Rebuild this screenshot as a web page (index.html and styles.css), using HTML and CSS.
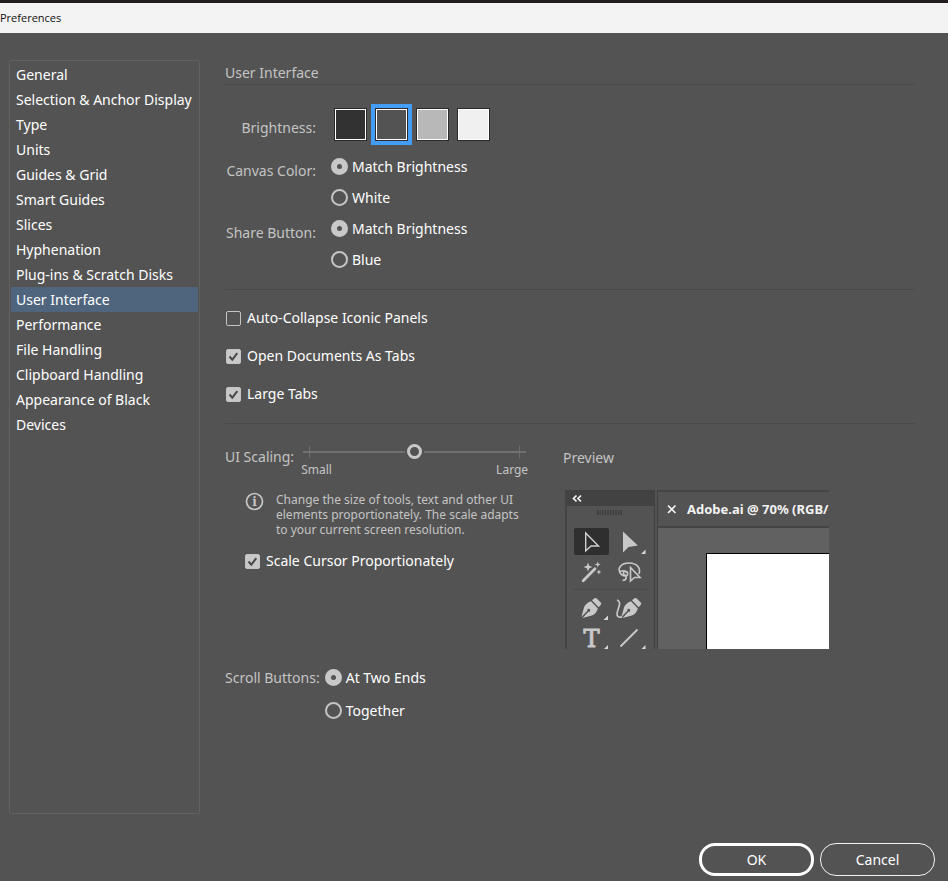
FILE: index.html
```html
<!DOCTYPE html>
<html lang="en">
<head>
    <meta charset="UTF-8">
    <meta name="viewport" content="width=device-width, initial-scale=1.0">
    <title>Preferences</title>
    <link rel="stylesheet" href="styles.css">
</head>
<body>
    <header class="titlebar">Preferences</header>

    <form class="dialog">
        <div class="content">
            <nav class="sidebar">
                <a href="#general">General</a>
                <a href="#selection">Selection &amp; Anchor Display</a>
                <a href="#type">Type</a>
                <a href="#units">Units</a>
                <a href="#guides">Guides &amp; Grid</a>
                <a href="#smart-guides">Smart Guides</a>
                <a href="#slices">Slices</a>
                <a href="#hyphenation">Hyphenation</a>
                <a href="#plugins">Plug-ins &amp; Scratch Disks</a>
                <a href="#interface" class="active" aria-current="page">User Interface</a>
                <a href="#performance">Performance</a>
                <a href="#files">File Handling</a>
                <a href="#clipboard">Clipboard Handling</a>
                <a href="#black">Appearance of Black</a>
                <a href="#devices">Devices</a>
            </nav>

            <main class="panel">
                <h1>User Interface</h1>

                <section class="appearance">
                    <span class="label" id="brightness-label">Brightness:</span>
                    <div class="swatches" role="radiogroup" aria-labelledby="brightness-label">
                        <input type="radio" name="brightness" class="swatch dark" aria-label="Dark">
                        <input type="radio" name="brightness" class="swatch medium-dark" aria-label="Medium Dark" checked>
                        <input type="radio" name="brightness" class="swatch medium-light" aria-label="Medium Light">
                        <input type="radio" name="brightness" class="swatch light" aria-label="Light">
                    </div>

                    <span class="label" id="canvas-label">Canvas Color:</span>
                    <div class="options" role="radiogroup" aria-labelledby="canvas-label">
                        <label><input type="radio" name="canvas" class="radio" checked>Match Brightness</label>
                        <label><input type="radio" name="canvas" class="radio">White</label>
                    </div>

                    <span class="label" id="share-label">Share Button:</span>
                    <div class="options" role="radiogroup" aria-labelledby="share-label">
                        <label><input type="radio" name="share" class="radio" checked>Match Brightness</label>
                        <label><input type="radio" name="share" class="radio">Blue</label>
                    </div>
                </section>

                <section class="tabs">
                    <label><input type="checkbox" class="check">Auto-Collapse Iconic Panels</label>
                    <label><input type="checkbox" class="check" checked>Open Documents As Tabs</label>
                    <label><input type="checkbox" class="check" checked>Large Tabs</label>
                </section>

                <section class="scaling">
                    <div class="scale-settings">
                        <div class="scale-row">
                            <label class="label" for="scale">UI Scaling:</label>
                            <div class="slider">
                                <input type="range" id="scale" min="0" max="100" value="50">
                                <div class="slider-ends"><span>Small</span><span>Large</span></div>
                            </div>
                        </div>
                        <div class="scale-details">
                            <div class="info">
                                <svg width="19" height="19" viewBox="0 0 19 19" aria-hidden="true">
                                    <circle cx="9.5" cy="9.5" r="8" fill="none" stroke="#c6c6c6" stroke-width="1.7"/>
                                    <text x="9.5" y="14" class="info-mark">i</text>
                                </svg>
                                <p>Change the size of tools, text and other UI elements proportionately. The scale adapts to your current screen resolution.</p>
                            </div>
                            <label><input type="checkbox" class="check" checked>Scale Cursor Proportionately</label>
                        </div>
                    </div>

                    <div class="preview">
                        <h2>Preview</h2>
                        <svg width="264" height="159" viewBox="0 0 264 159" role="img" aria-label="Preview of the scaled interface">
                            <!-- tool panel -->
                            <rect width="90" height="159" fill="#535353"/>
                            <rect width="90" height="16" fill="#424242"/>
                            <path d="M1 0V159" stroke="#444" stroke-width="2"/>
                            <path d="M89.5 0V159M92.5 0V159" stroke="#404040"/>
                            <path d="M11.5 5.5L8.5 8.5L11.5 11.5M16 5.5L13 8.5L16 11.5" fill="none" stroke="#f2f2f2" stroke-width="1.7"/>
                            <path d="M32 22.5H57" stroke="#3c3c3c" stroke-width="5" stroke-dasharray="1.4 1.2"/>
                            <path d="M8 99.5H83" stroke="#4a4a4a"/>

                            <!-- selection, direct selection -->
                            <rect x="9" y="38" width="35" height="27" rx="2" fill="#2f2f2f"/>
                            <path d="M20.7 43V61L26 56H33.5Z" fill="none" stroke="#d0d0d0" stroke-width="1.4"/>
                            <path d="M58 41.5V62.5L63.5 57L72.8 55.4Z" fill="#c8c8c8"/>

                            <!-- magic wand -->
                            <path d="M18.2 90.8L30 78.8" stroke="#c8c8c8" stroke-width="2.8" stroke-linecap="round"/>
                            <g fill="#c8c8c8">
                                <path d="M23 72.5L24.2 75.8L27.5 77L24.2 78.2L23 81.5L21.8 78.2L18.5 77L21.8 75.8Z"/>
                                <path d="M32.7 71.5L33.5 73.7L35.7 74.5L33.5 75.3L32.7 77.5L31.9 75.3L29.7 74.5L31.9 73.7Z"/>
                                <path d="M33.9 79.5L34.6 81.3L36.4 82L34.6 82.7L33.9 84.5L33.2 82.7L31.4 82L33.2 81.3Z"/>
                            </g>

                            <!-- lasso -->
                            <g fill="none" stroke="#c8c8c8" stroke-width="1.6">
                                <path d="M74 84C76 78 72 73 64 73C56 73 53 78 54.5 81.5C55.5 84.500 58 86 60.500 86C63 86 63.500 82 61 81.500C58.500 81 57.500 83.500 59 84.500C62 86 62.500 90 57.500 90.500"/>
                                <path d="M54.500 82C57 80.500 60 80.500 62 82.500"/>
                                <path d="M65.500 77.500V91L69.500 87.500H75Z" fill="#535353"/>
                            </g>

                            <!-- pen, curvature -->
                            <g id="pen" fill="#c8c8c8">
                                <path d="M26 111.200L32.800 118.400C31.800 122 30 124.400 26.800 125.400L17.600 127.900L23.300 121.700A1.500 1.500 0 1 0 22.300 120.700L16.400 127L19 117.500C20 114.500 22.500 112.200 26 111.200Z"/>
                                <path d="M27 110.300L29.800 108.100Q30.700 107.600 31.400 108.300L36 112.800Q36.600 113.600 36 114.400L33.600 117.300Z"/>
                            </g>
                            <use href="#pen" x="40"/>
                            <path d="M52 110C58.500 112.500 50.500 121 52.300 125.500C53 127.600 55.500 127.600 57 126.500" fill="none" stroke="#c8c8c8" stroke-width="1.700"/>

                            <!-- type, line -->
                            <text x="26.500" y="157" class="type-tool">T</text>
                            <path d="M55.500 156.500L72.500 139.500" stroke="#c8c8c8" stroke-width="2"/>
                            <path d="M76 64H80.500V59.500ZM38.500 130H43V125.500ZM39 159H43V155ZM76.500 159H80.500V155Z" fill="#d6d6d6"/>

                            <!-- document window -->
                            <rect x="93" y="38" width="171" height="121" fill="#616161"/>
                            <path d="M0 1H90M92 1H264M93 37H264" stroke="#424242" stroke-width="1.500"/>
                            <path d="M103 15.500L110.500 23M110.500 15.500L103 23" stroke="#f2f2f2" stroke-width="1.700"/>
                            <text x="122" y="24" class="doc-title">Adobe.ai @ 70% (RGB/</text>
                            <rect x="141" y="63" width="123" height="96"/>
                            <rect x="142" y="64" width="122" height="95" fill="#fff"/>
                        </svg>
                    </div>
                </section>

                <section class="scroll">
                    <span class="label" id="scroll-label">Scroll Buttons:</span>
                    <div class="options" role="radiogroup" aria-labelledby="scroll-label">
                        <label><input type="radio" name="scroll" class="radio" checked>At Two Ends</label>
                        <label><input type="radio" name="scroll" class="radio">Together</label>
                    </div>
                </section>
            </main>
        </div>

        <footer class="actions">
            <button type="submit" class="primary">OK</button>
            <button type="button">Cancel</button>
        </footer>
    </form>
</body>
</html>
```

FILE: styles.css
```css
* {
    box-sizing: border-box;
}

body {
    margin: 0;
    min-height: 100vh;
    display: flex;
    flex-direction: column;
    background: #535353;
    color: #fff;
    font-family: "Noto Sans", sans-serif;
    font-size: 14px;
    line-height: 20px;
}

.titlebar {
    height: 33px;
    border-top: 3px solid #201c20;
    background: #f3f3f3;
    color: #111;
    font-family: "Open Sans", sans-serif;
    font-size: 11px;
    line-height: 30px;
}

.dialog {
    flex: 1;
    display: flex;
    flex-direction: column;
}

.content {
    flex: 1;
    display: grid;
    grid-template-columns: 191px 1fr;
    gap: 25px;
    padding: 27px 33px 0 9px;
}

/* Sidebar */
.sidebar {
    padding: 1px;
    border: 1px solid #616161;
    border-radius: 2px;
}

.sidebar a {
    display: block;
    padding-left: 5px;
    color: #fff;
    line-height: 25px;
    text-decoration: none;
    white-space: nowrap;
}

.sidebar a.active {
    background: #4f657d;
}

/* Main panel */
h1,
h2 {
    margin: 0;
    color: #c4c4c4;
    font-size: 14px;
    font-weight: normal;
}

h1 {
    padding: 3px 0 1px;
    border-bottom: 1px solid #494949;
}

.label {
    color: #c4c4c4;
    white-space: nowrap;
}

label {
    display: flex;
    align-items: center;
    gap: 6px;
}

.appearance {
    display: grid;
    grid-template-columns: 91px 1fr;
    column-gap: 15px;
    padding: 23px 0 14px;
    border-bottom: 1px solid #494949;
}

.appearance .label {
    padding-top: 10px;
    text-align: right;
}

.swatches {
    display: flex;
    gap: 8px;
    padding: 0 3px 10px;
}

.swatch {
    appearance: none;
    width: 33px;
    height: 33px;
    margin: 0;
    border: 1px solid #2b2b2b;
    box-shadow: inset 0 0 0 1px #fff;
}

.swatch:checked {
    outline: 4px solid #449df5;
}

.dark {
    background: #323232;
}

.medium-dark {
    background: #535353;
}

.medium-light {
    background: #b8b8b8;
}

.light {
    background: #f0f0f0;
}

.options label {
    gap: 4px;
    height: 31px;
}

.radio {
    appearance: none;
    width: 17px;
    height: 17px;
    margin: 0;
    border: 2px solid #c4c4c4;
    border-radius: 50%;
}

.radio:checked {
    border-width: 6px;
    border-color: #c8c8c8;
}

.check {
    appearance: none;
    width: 15px;
    height: 15px;
    margin: 0;
    border: 1px solid #c4c4c4;
    border-radius: 2px;
}

.check:checked {
    background: #c8c8c8 url("data:image/svg+xml,%3Csvg xmlns='http://www.w3.org/2000/svg' viewBox='0 0 13 13'%3E%3Cpath d='M2.500 6.500L5.300 9.600L10.300 3.200' fill='none' stroke='%23484848' stroke-width='2'/%3E%3C/svg%3E");
}

.tabs {
    display: flex;
    flex-direction: column;
    gap: 18px;
    padding: 18px 1px 19px;
    border-bottom: 1px solid #494949;
}

/* UI scaling */
.scaling {
    display: grid;
    grid-template-columns: 338px 1fr;
}

.scale-row {
    display: flex;
    gap: 9px;
    padding-top: 20px;
}

.scale-row .label {
    height: 26px;
}

.slider {
    width: 223px;
    color: #c4c4c4;
    font-size: 12px;
}

/* tick marks near both ends of the track */
.slider input {
    appearance: none;
    display: block;
    width: 100%;
    height: 16px;
    margin: 0;
    background:
        linear-gradient(#6e6e6e, #6e6e6e) 6px 2px / 1px 12px no-repeat,
        linear-gradient(#6e6e6e, #6e6e6e) 216px 2px / 1px 12px no-repeat;
}

.slider input::-webkit-slider-runnable-track {
    height: 2px;
    background: #707070;
}

.slider input::-webkit-slider-thumb {
    appearance: none;
    width: 15px;
    height: 15px;
    margin-top: -7px;
    border: 3px solid #c8c8c8;
    border-radius: 50%;
    background: #535353;
    box-shadow: 0 0 0 2px #535353;
}

.slider-ends {
    display: flex;
    justify-content: space-between;
    margin: 0 -2px;
}

.scale-details {
    padding: 12px 0 0 20px;
}

.info {
    display: flex;
    gap: 12px;
    margin-bottom: 14px;
}

.info svg {
    flex: none;
}

.info p {
    width: 244px;
    margin: 0;
    color: #c4c4c4;
    font-size: 12px;
    line-height: 15px;
}

.info-mark {
    fill: #c6c6c6;
    font: bold 12px "DejaVu Serif", serif;
    text-anchor: middle;
}

.preview {
    padding-top: 24px;
}

.preview svg {
    display: block;
    margin: 22px 0 0 2px;
    overflow: visible;
}

.type-tool {
    fill: #c8c8c8;
    stroke: #c8c8c8;
    font: 24px "DejaVu Serif", serif;
    text-anchor: middle;
}

.doc-title {
    fill: #f2f2f2;
    font: bold 13px "Noto Sans", sans-serif;
}

.scroll {
    display: flex;
    gap: 5px;
    padding-top: 12px;
}

.scroll .label {
    padding-top: 7px;
}

.scroll .options label {
    height: 33px;
}

/* Buttons */
.actions {
    display: flex;
    justify-content: flex-end;
    gap: 6px;
    padding: 29px 13px 5px;
}

.actions button {
    width: 115px;
    height: 33px;
    border: 1px solid #f2f2f2;
    border-radius: 16px;
    background: transparent;
    color: #fff;
    font: inherit;
}

.actions .primary {
    border: 3px solid #fff;
}
```
